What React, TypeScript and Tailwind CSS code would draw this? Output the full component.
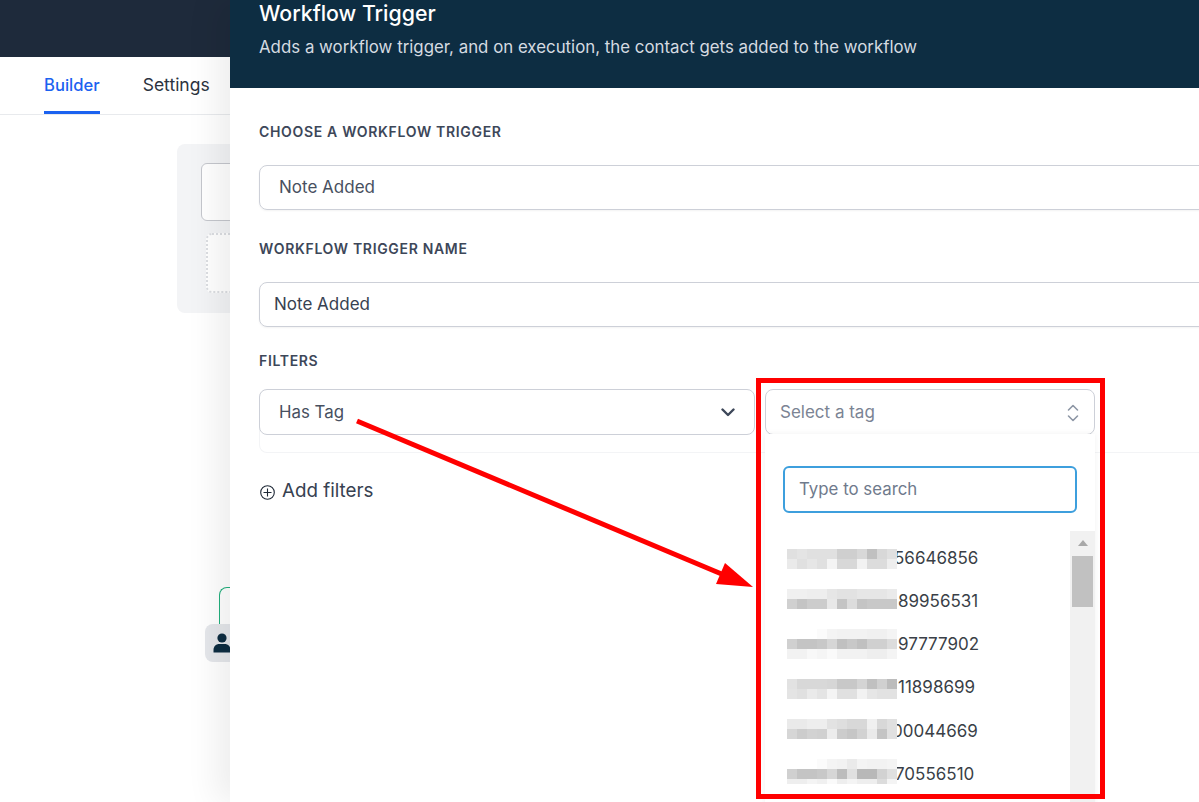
const blurRows = [
  {
    text: "56646856",
    shift: 0,
    nudge: 0,
    rows: [
      ["e0", "e4", "e0", "e0", "e0", "cf", "cf", "d8", "c0", "d8", "e0"],
      ["ea", "e0", "e6", "e0", "f4", "d8", "d8", "f2", "dc", "dc", "ee"],
    ],
  },
  {
    text: "89956531",
    shift: -3,
    nudge: 4,
    rows: [
      ["f0", "f0", "ee", "ee", "e6", "e2", "e2", "e6", "e6", "e6", "ea"],
      ["d0", "c4", "cc", "cc", "e8", "c4", "dc", "c4", "c8", "c8", "c8"],
    ],
  },
  {
    text: "97777902",
    shift: -1,
    nudge: 4,
    rows: [
      ["ff", "ff", "ff", "fb", "f4", "f2", "f2", "f2", "f0", "f0", "f4"],
      ["d0", "c4", "c4", "c8", "d6", "c0", "c8", "c0", "d0", "d0", "dc"],
      ["f2", "f2", "f8", "f5", "fa", "f2", "f2", "f2", "ee", "ee", "f4"],
    ],
  },
  {
    text: "11898699",
    shift: 1,
    nudge: 4,
    rows: [
      ["e2", "d8", "d8", "d8", "d6", "c8", "c8", "d4", "c0", "d0", "bc"],
      ["e4", "e0", "ea", "e4", "f4", "e0", "e0", "f2", "e6", "e2", "e2"],
    ],
  },
  {
    text: "00044669",
    shift: -2,
    nudge: -2,
    rows: [
      ["ea", "ea", "ee", "ee", "e2", "de", "d8", "d8", "f0", "d8", "e0"],
      ["d6", "cc", "d2", "d0", "ec", "cc", "c6", "d2", "ea", "c4", "e0"],
    ],
  },
  {
    text: "70556510",
    shift: -3,
    nudge: 1,
    short: true,
    rows: [
      ["ff", "ff", "ff", "fb", "f4", "f2", "ea", "f4", "f2", "f2", "f4"],
      ["d0", "c4", "c4", "c8", "d6", "bc", "e0", "b8", "b8", "d2", "e0"],
      ["ee", "ee", "f4", "f0", "fa", "ee", "f4", "ee", "ee", "dc", "f4"],
    ],
  },
];

function Label(props: any) {
  return (
    <p className="text-[14px] leading-5 font-semibold tracking-[0.048em] uppercase text-[#3d4759]">
      {props.children}
    </p>
  );
}

function Blur(props: any) {
  return (
    <div
      className="relative z-10 w-[110px] shrink-0"
      style={{ transform: `translateY(${props.shift}px)` }}
    >
      {props.rows.map((row: string[], i: number) => (
        <div key={i} className="flex" style={{ height: props.short && i == 2 ? 5 : 10 }}>
          {row.map((c, j) => (
            <div key={j} className="w-[10px]" style={{ background: `#${c}${c}${c}` }}></div>
          ))}
        </div>
      ))}
    </div>
  );
}

function Canvas() {
  return (
    <div className="relative h-[687px]">
      <div className="absolute left-[177px] top-[29px] w-[120px] h-[169px] rounded-lg bg-[#f3f4f6]">
        <div className="absolute left-[24px] top-[19px] w-[90px] h-[58px] rounded-md border border-[#c5c7cd] bg-white"></div>
        <div className="absolute left-[29px] top-[89px] w-[90px] h-[60px] rounded-md border-2 border-dotted border-[#dcdee2] bg-white"></div>
      </div>
      <div className="absolute left-[219px] top-[472px] w-[20px] h-[40px] rounded-tl-lg border-l border-t border-[#22b07d]"></div>
      <div className="absolute left-[205px] top-[509px] w-[50px] h-[38px] rounded-lg bg-[#e5e7eb] flex items-center pl-[8px]">
        <svg width="18" height="20" viewBox="0 0 18 20" fill="#0d2d42">
          <circle cx="9" cy="5" r="4.6" />
          <path d="M0.5 19.5v-2.5c0-4 3-6 5.500-6h6c2.500 0 5.500 2 5.500 6v2.500z" />
        </svg>
      </div>
    </div>
  );
}

function Dropdown() {
  return (
    <div className="absolute -left-px top-full w-[330px] h-[400px] bg-white shadow-[0_0_6px_rgba(0,0,0,0.06)] pt-[32px]">
      <div className="mx-[18px] h-[47px] rounded-md border-2 border-[#3d9fdd] flex items-center pl-[14px] text-[16.85px] text-[#6f7a8c]">
        Type to search
      </div>
      <div className="flex mt-[18px]">
        <div className="flex-1 pt-[6px]">
          {blurRows.map((row) => (
            <div key={row.text} className="flex items-center h-[43.2px] pl-[22px] text-[17px] text-[#3a3f47]">
              <Blur rows={row.rows} shift={row.shift} short={row.short} />
              <span style={{ marginLeft: row.nudge - 3 }}>{row.text}</span>
            </div>
          ))}
        </div>
        <div className="w-[25px] h-[280px] bg-[#f1f1f1] px-[2px] pt-[9px] flex flex-col items-center">
          <div className="w-0 h-0 border-x-[5px] border-x-transparent border-b-[6px] border-b-[#a8a8a8]"></div>
          <div className="w-[21px] h-[51px] bg-[#c1c1c1] mt-[10px]"></div>
        </div>
      </div>
    </div>
  );
}

function Drawer() {
  return (
    <div className="absolute left-[230px] top-0 w-[1000px] h-[802px] bg-white shadow-[-14px_0_30px_rgba(0,0,0,0.07)]">
      <div className="h-[88px] bg-[#0d2d42] pl-[29px] flex flex-col">
        <h2 className="-mt-px text-[21.3px] leading-7 font-medium text-white">Workflow Trigger</h2>
        <p className="mt-2 text-[16.85px] leading-6 text-[#d5dbe1]">
          Adds a workflow trigger, and on execution, the contact gets added to the workflow
        </p>
      </div>
      <div className="pl-[29px] pt-[34px]">
        <Label>Choose a workflow trigger</Label>
        <div className="mt-[23px] h-[45px] rounded-lg border border-[#cdd0d8] shadow-[0_1px_2px_rgba(0,0,0,0.05)] flex items-center pl-[19px] text-[17px] text-[#475060]">
          Note Added
        </div>
        <div className="mt-[29px]">
          <Label>Workflow trigger name</Label>
        </div>
        <div className="mt-[23px] h-[45px] rounded-lg border border-[#cdd0d8] shadow-[0_1px_2px_rgba(0,0,0,0.05)] flex items-center pl-[14px] text-[17px] text-[#374151]">
          Note Added
        </div>
        <div className="mt-6">
          <Label>Filters</Label>
        </div>
        <div className="mt-[18px] h-[64px] rounded-lg border border-[#f3f4f6] border-t-0">
          <div className="flex gap-[10px] -ml-px">
            <div className="w-[496px] h-[46px] rounded-lg border border-[#cdd0d8] flex items-center justify-between pl-[19px] pr-[19px] text-[16.85px] text-[#475060]">
              <span className="pt-[2px]">Has Tag</span>
              <svg width="14" height="9" viewBox="0 0 14 9" fill="none" stroke="#3d4759" strokeWidth="2.400" strokeLinecap="round" strokeLinejoin="round">
                <polyline points="1.500,1.500 7,7 12.500,1.500" />
              </svg>
            </div>
            <div className="relative w-[330px] h-[46px] rounded-lg border border-[#cdd0d8] flex items-center justify-between pl-[14px] pr-[15px] text-[17px] text-[#7b8494]">
              <span className="pt-[2px]">Select a tag</span>
              <svg className="mt-px" width="12" height="18" viewBox="0 0 12 18" fill="none" stroke="#8d96a5" strokeWidth="1.600" strokeLinecap="round" strokeLinejoin="round">
                <polyline points="1.500,6 6,1.500 10.500,6" />
                <polyline points="1.500,12 6,16.500 10.500,12" />
              </svg>
              <Dropdown />
            </div>
          </div>
        </div>
        <div className="mt-[24px] flex items-center gap-[7px] text-[18.8px] leading-7 text-[#374151]">
          <svg className="mt-[3px] ml-px" width="15" height="15" viewBox="0 0 15 15" fill="none" stroke="#1f2937" strokeWidth="1.100">
            <circle cx="7.500" cy="7.500" r="6.800" />
            <path d="M7.500 3.500v8M3.500 7.500h8" />
          </svg>
          Add filters
        </div>
      </div>
    </div>
  );
}

export default function App() {
  return (
    <div className="relative w-[1199px] h-[802px] overflow-hidden bg-white font-['Inter',sans-serif]">
      <div className="h-[57px] bg-[#1e2a3b]"></div>
      <div className="h-[58px] border-b border-[#e8eaed] flex gap-[43px] pl-[44px] text-[17px]">
        <div className="h-[57px] pt-[16px] border-b-[3px] border-[#1b62f0] text-[16.6px] font-medium text-[#1b62f0]">Builder</div>
        <div className="pt-[15px] text-[17.500px] text-[#2b3340]">Settings</div>
      </div>
      <Canvas />
      <Drawer />
      {/* annotation drawn on top of the screenshot */}
      <svg className="absolute left-0 top-0 z-20" width="1199" height="802" viewBox="0 0 1199 802" fill="none">
        <line x1="357" y1="421" x2="724" y2="575" stroke="#ff0000" strokeWidth="5" />
        <polygon points="725,563 753,587 716,584" fill="#ff0000" />
      </svg>
      <div className="absolute left-[756px] top-[378px] z-20 w-[349px] h-[421px] border-[5px] border-[#ff0000]"></div>
    </div>
  );
}
